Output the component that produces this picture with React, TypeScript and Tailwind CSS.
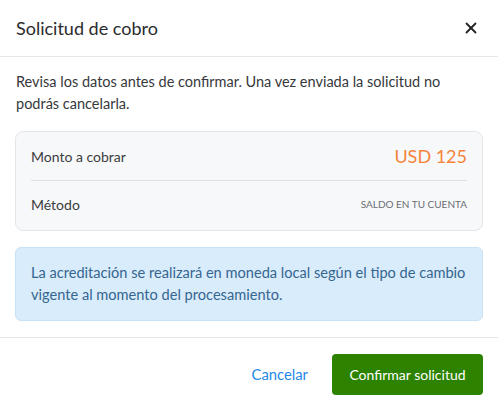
import { X } from "lucide-react";

// Fila de la tarjeta de resumen
const Row = ({ label, children }: { label: string; children: React.ReactNode }) => (
  <div className="flex items-center justify-between h-[47px]">
    <span className="text-[14px] text-[#3b3d40]">{label}</span>
    {children}
  </div>
);

export default function App() {
  return (
    <div className="w-[498px] h-[411px] bg-white font-['Lato',sans-serif] text-[#2b2d30] flex flex-col">
      {/* Cabecera */}
      <header className="flex items-center justify-between h-[57px] pl-4 pr-[15px] border-b border-[#e6e7e9]">
        <h1 className="text-[18px] text-[#2a2b2d]">Solicitud de cobro</h1>
        <button className="w-6 h-6 flex items-center justify-center text-[#222]">
          <X size={18} strokeWidth={2.4} />
        </button>
      </header>

      {/* Cuerpo */}
      <div className="flex flex-col px-[15px] pt-[14px] pb-4 border-b border-[#e6e7e9]">
        <p className="pl-px text-[14.5px] leading-[22px] text-[#36383b]">
          Revisa los datos antes de confirmar. Una vez enviada la solicitud no podrás cancelarla.
        </p>

        <div className="mt-[16px] rounded-lg border border-[#e3e5e8] bg-[#f7f8fa] px-[15px] py-[1px]">
          <Row label="Monto a cobrar">
            <span className="text-[18px] text-[#f5843a]">USD 125</span>
          </Row>
          <div className="h-px bg-[#dfe1e4]" />
          <div className="flex items-center justify-between h-[48px] pb-[2px]">
            <span className="text-[14px] text-[#3b3d40]">Método</span>
            <span className="text-[10px] uppercase text-[#6b6e73]">Saldo en tu cuenta</span>
          </div>
        </div>

        <div className="mt-4 rounded-md border border-[#c9e1f5] bg-[#d9ecfb] px-[15px] py-[14px] text-[14.6px] leading-[22px] text-[#356690]">
          La acreditación se realizará en moneda local según el tipo de cambio vigente al momento del procesamiento.
        </div>
      </div>

      {/* Pie */}
      <footer className="flex items-center justify-end gap-6 px-[15px] pt-4">
        <button className="text-[14.8px] text-[#1f88e5]">Cancelar</button>
        <button className="h-[41px] w-[151px] rounded bg-[#2d8300] text-[14px] text-white">Confirmar solicitud</button>
      </footer>
    </div>
  );
}
